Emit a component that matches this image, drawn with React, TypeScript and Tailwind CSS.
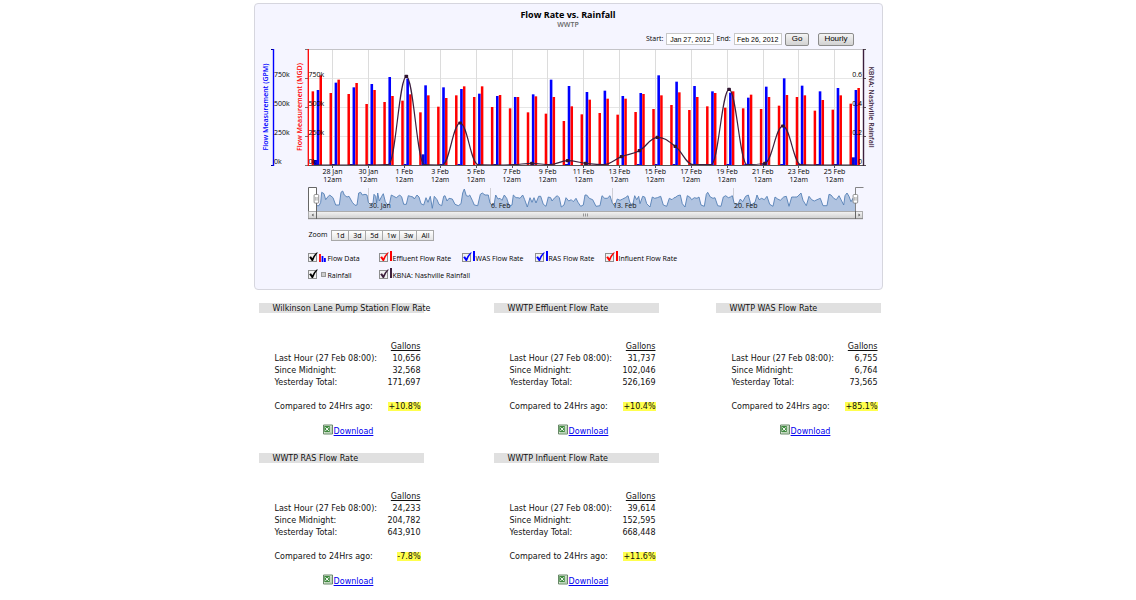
import React from "react";

/* ---------- Chart data ---------- */

// Daily flow bars, in 1/348 of full scale: [effluent, return/waste, influent, pump station]
const FLOW: number[][] = [
  [221, 225, 269, 15], [216, 247, 256, 3], [213, 233, 246, 3], [183, 243, 225, 3],
  [189, 264, 207, 3], [193, 259, 212, 3], [158, 239, 209, 32], [175, 233, 201, 3],
  [209, 228, 236, 3], [204, 214, 236, 0], [174, 207, 210, 3], [170, 204, 204, 0],
  [158, 212, 206, 0], [154, 256, 204, 0], [132, 237, 176, 3], [152, 219, 196, 0],
  [156, 223, 199, 0], [151, 207, 199, 0], [159, 216, 213, 3], [168, 269, 209, 3],
  [180, 250, 218, 3], [165, 237, 204, 3], [176, 221, 216, 3], [172, 217, 221, 3],
  [170, 202, 211, 3], [168, 235, 204, 3], [178, 260, 210, 3], [204, 238, 209, 3],
  [163, 221, 195, 3], [166, 231, 209, 3], [184, 225, 231, 23],
];

const RAIN = [
  0, 0, 0, 0, 1, 266, 1, 0, 126, 1, 0, 1, 5, 1, 13, 5, 1, 25, 43, 83, 56, 1, 1, 227, 1, 5, 117, 1, 0, 0, 0,
];

const TICKS = [
  "28 Jan", "30 Jan", "1 Feb", "3 Feb", "5 Feb", "7 Feb", "9 Feb", "11 Feb",
  "13 Feb", "15 Feb", "17 Feb", "19 Feb", "21 Feb", "23 Feb", "25 Feb",
];

// Hourly overview trace, three segments of [x, y] thirds
const TRACE: [number, number[]][] = [
  [51, [36,68,42,68,47,58,50,28,57,32,62,50,68,42,74,36,84,44,92,66,103,66,108,28,113,24,118,36,126,42,132,40,142,58,150,67,156,66,161,30,167,28,172,36,180,34,186,36,190,58,198,66,204,60,207,34,212,40,215,60,218,30,223,54,230,40,235,32,241,56,248,66,254,60,259,36,266,40,274,44,284,36,290,42,296,64,304,64,310,38,316,40,324,42,328,48,336,36,342,42,348,62,356,66,363,44,369,58,376,40,382,76,388,40,396,50,402,64,410,68,416,40,420,38,426,54,432,46,442,48,450,64,460,68,468,62,473,30,478,18,484,38,490,40,494,36,502,52,508,66,518,68,526,34,532,30,540,36,550,36,555,60]],
  [236, [5,66,12,66,17,36,24,48,30,46,36,52,43,36,50,46,58,70,66,66,70,36,78,44,84,44,90,46,98,36,104,50,112,72,120,44,126,58,132,44,138,60,146,40,152,40,160,64,168,70,175,42,182,44,186,54,194,44,202,38,208,44,214,72,222,66,228,44,236,54,244,50,250,56,258,46,264,58,272,70,280,66,285,36,290,36,298,46,308,50,318,70,330,68,336,38,344,46,352,46,360,38,366,58,374,70,382,48,390,52,398,48,406,44,414,38,420,60,428,66,434,38,440,50,446,40,450,62,458,40,464,42,470,62,480,72,487,42,494,46,502,44,512,40,520,66,530,70,538,46,546,50,552,44]],
  [421, [0,44,8,38,16,36,22,62,30,72,37,38,44,42,50,50,58,44,66,46,72,42,78,66,88,70,94,34,98,28,106,42,114,46,120,44,128,68,138,70,145,42,152,38,160,44,166,42,172,38,178,62,188,66,196,48,203,56,212,40,220,36,228,66,234,62,240,58,246,36,252,50,260,46,268,50,276,40,284,64,294,70,300,42,308,48,316,52,326,42,334,40,342,70,350,42,358,42,366,42,378,30,384,52,394,68,402,40,410,50,418,54,426,50,436,46,444,68,456,68,462,34,468,36,476,46,484,50,492,38,500,54,506,66,510,38,516,30,522,40,528,56,534,46,540,58]],
];

/* ---------- Chart geometry ---------- */

const LEFT = 54;
const RIGHT = 609;
const TOP = 4;
const BASE = 120;
const DAY = 17.93;

const rainPoints = RAIN.map((v, i) => ({ x: 62.7 + DAY * i, y: BASE - v / 3 }));

function splinePath(pts: { x: number; y: number }[]) {
  let out = `M${pts[0].x} ${pts[0].y}`;
  let prevRight = pts[0];
  for (let i = 1; i < pts.length; i++) {
    const p = pts[i];
    const last = pts[i - 1];
    const next = pts[i + 1];
    let left = p;
    let right = p;
    if (next) {
      const lx = (1.5 * p.x + last.x) / 2.5;
      let ly = (1.5 * p.y + last.y) / 2.5;
      const rx = (1.5 * p.x + next.x) / 2.5;
      let ry = (1.5 * p.y + next.y) / 2.5;
      const fix = ((ry - ly) * (rx - p.x)) / (rx - lx) + p.y - ry;
      ly += fix;
      ry += fix;
      if (ly > last.y && ly > p.y) {
        ly = Math.max(last.y, p.y);
        ry = 2 * p.y - ly;
      } else if (ly < last.y && ly < p.y) {
        ly = Math.min(last.y, p.y);
        ry = 2 * p.y - ly;
      }
      if (ry > next.y && ry > p.y) {
        ry = Math.max(next.y, p.y);
        ly = 2 * p.y - ry;
      } else if (ry < next.y && ry < p.y) {
        ry = Math.min(next.y, p.y);
        ly = 2 * p.y - ry;
      }
      left = { x: lx, y: ly };
      right = { x: rx, y: ry };
    }
    out += `C${prevRight.x} ${prevRight.y} ${left.x} ${left.y} ${p.x} ${p.y}`;
    prevRight = right;
  }
  return out;
}

const tracePoints = TRACE.flatMap(([start, list]) => {
  const pts: string[] = [];
  for (let i = 0; i < list.length; i += 2) {
    pts.push(`${(start + list[i] / 3).toFixed(1)} ${(138 + list[i + 1] / 3).toFixed(1)}`);
  }
  return pts;
});

function Bar({ x, v, w, fill }: { x: number; v: number; w: number; fill: string }) {
  return v > 0 ? <rect x={x} y={BASE - v / 3} width={w} height={v / 3} fill={fill} /> : null;
}

function Handle({ x }: { x: number }) {
  return (
    <g>
      <rect x={x - 2.2} y="149.5" width="4.6" height="8.6" rx="1" fill="#fff" stroke="#777" strokeWidth="0.8" />
      <path d={`M${x - 0.6} 152v3.6M${x + 0.8} 152v3.6`} stroke="#777" strokeWidth="0.6" />
    </g>
  );
}

function Chart() {
  return (
    <svg viewBox="0 0 629 176" className="block w-full font-['Open_Sans',sans-serif] text-[7px]" role="img" aria-label="Flow rate and rainfall by day">
      <defs>
        <linearGradient id="track" x1="0" y1="0" x2="0" y2="1">
          <stop offset="0" stopColor="#f4f4f4" />
          <stop offset="1" stopColor="#cfcfcf" />
        </linearGradient>
      </defs>

      <rect x={LEFT} y={TOP} width={RIGHT - LEFT} height={BASE - TOP} fill="#fff" />
      <g stroke="#dcdcdc" strokeWidth="1">
        {[33.5, 62.5, 91.5].map((y) => (
          <path key={y} d={`M${LEFT} ${y}H${RIGHT}`} stroke="#e6e6e6" />
        ))}
        {TICKS.map((t, i) => (
          <path key={t} d={`M${Math.floor(78.7 + 2 * DAY * i) + 0.5} ${TOP}V${BASE}`} />
        ))}
      </g>
      <path d={`M${LEFT} 4.5H${RIGHT}`} stroke="#c4c4c8" />

      {FLOW.map(([eff, was, inf, pump], i) => {
        const x = DAY * i;
        return (
          <g key={i}>
            <Bar x={57.6 + x} v={eff} w={2.5} fill="#ff0000" />
            <Bar x={60 + x} v={pump} w={3} fill="#0808c8" />
            <Bar x={62.7 + x} v={was} w={2.6} fill="#0000ff" />
            <Bar x={65.5 + x} v={inf} w={2.5} fill="#ff0000" />
          </g>
        );
      })}

      <path d={splinePath(rainPoints)} fill="none" stroke="#3d1f3d" strokeWidth="1.2" />
      {rainPoints.map((p, i) =>
        RAIN[i] > 1 ? <rect key={i} x={p.x - 1.8} y={p.y - 1.6} width="3.6" height="3.2" rx="0.8" fill="#301530" /> : null,
      )}

      <path d={`M${LEFT} 120.5H${RIGHT + 1}`} stroke="#555" />
      {TICKS.map((t, i) => (
        <path key={t} d={`M${Math.floor(78.7 + 2 * DAY * i) + 0.5} 121v2`} stroke="#555" />
      ))}
      <path d="M17 4.5h3M17 120.5h3" stroke="#000080" />
      <path d="M19.5 4V121" stroke="#0000ff" strokeWidth="1.4" />
      <path d="M51 4.5h3M51 33.5h3M51 62.5h3M51 91.5h3M51 120.5h3" stroke="#777" />
      <path d="M54.3 4V121" stroke="#ff0000" strokeWidth="1.3" />
      <path d="M609 4.5h3M609 33.5h3M609 62.5h3M609 91.5h3M609 120.5h3" stroke="#555" />
      <path d="M609.5 4V121" stroke="#3d1f3d" strokeWidth="1.4" />

      <g fill="#000">
        {["750k", "500k", "250k", "0k"].map((t, i) => (
          <g key={t}>
            <text x="20" y={32 + 29 * i}>{t}</text>
            <text x="54.5" y={32 + 29 * i}>{t}</text>
          </g>
        ))}
        {["0.6", "0.4", "0.2", "0"].map((t, i) => (
          <text key={t} x="608" y={32 + 29 * i} textAnchor="end">{t}</text>
        ))}
        {TICKS.map((t, i) => (
          <g key={t} textAnchor="middle">
            <text x={78.5 + 2 * DAY * i} y="129">{t}</text>
            <text x={78.5 + 2 * DAY * i} y="137">12am</text>
          </g>
        ))}
      </g>

      <g fontWeight="600" textAnchor="middle">
        <text transform="translate(14 62) rotate(-90)" fill="#0000ff">Flow Measurement (GPM)</text>
        <text transform="translate(48 62) rotate(-90)" fill="#ff0000">Flow Measurement (MGD)</text>
        <text transform="translate(615 62) rotate(90)" fill="#3d1f3d">KBNA: Nashville Rainfall</text>
      </g>

      {/* Overview strip */}
      {[114.5, 236.5, 358.5, 479.5].map((x) => (
        <path key={x} d={`M${x} 143V166`} stroke="#cfcfd6" />
      ))}
      <path d={`M63 166L${tracePoints.join("L")}L601 166Z`} fill="#b0c3e0" />
      <path d={`M${tracePoints.join("L")}`} fill="none" stroke="#5580b5" strokeWidth="0.9" />
      <g fill="#111">
        <text x="115" y="163">30. Jan</text>
        <text x="237" y="163">6. Feb</text>
        <text x="359" y="163">13. Feb</text>
        <text x="480" y="163">20. Feb</text>
      </g>
      <path d="M54.5 166V142.5H62.5V166" fill="#fff" stroke="#555" strokeWidth="0.9" />
      <path d="M609.5 142.5H601.5V166" fill="none" stroke="#777" strokeWidth="0.9" />
      <rect x="54.5" y="166.5" width="554" height="7" fill="url(#track)" stroke="#999" strokeWidth="0.8" />
      <path d="M54 173.7H609" stroke="#888" />
      <path d="M62.5 166V174M601.5 166V174" stroke="#666" />
      <path d="M59.5 168.5v3l-1.8-1.5zM604.5 168.5v3l1.8-1.5z" fill="#555" />
      <path d="M329.5 168.5v3M331.5 168.5v3M333.5 168.5v3" stroke="#777" strokeWidth="0.7" />
      <Handle x={62.3} />
      <Handle x={601.3} />
    </svg>
  );
}

/* ---------- Controls ---------- */

const BUTTON =
  "flex h-[13px] items-center rounded-[2px] border border-[#8c8c8c] bg-linear-to-b from-[#f4f4f4] to-[#d2d2d2] font-['Liberation_Sans',sans-serif] text-[8px] leading-none text-black";
const FIELD =
  "h-3 w-[48px] border border-[#c8c8c8] bg-white text-center font-['Liberation_Sans',sans-serif] text-[7px] leading-none text-black";

function Toggle({ label, tick, children }: { label: string; tick: string; children: React.ReactNode }) {
  return (
    <label className="flex h-3 items-center">
      <span className="relative block size-[9px] shrink-0">
        <input type="checkbox" defaultChecked className="peer block size-[9px] appearance-none border border-[#8e8f8f] bg-[#f2f2f2]" />
        <svg viewBox="0 0 10 10" className={`pointer-events-none absolute -top-px left-0 hidden size-[10px] peer-checked:block ${tick}`}>
          <path d="M1.2 5.2 3 4.2 4.3 6.2Q6 2.4 9 .2L9.8 .8Q6.6 4 5 9H3.8Z" fill="currentColor" />
        </svg>
      </span>
      {children}
      <span className="pt-[3px] leading-none whitespace-nowrap">{label}</span>
    </label>
  );
}

function Mark({ color }: { color: string }) {
  return <span className={`mr-px ml-[2px] h-[10px] w-[2px] shrink-0 self-start ${color}`} />;
}

function FlowPanel() {
  return (
    <section className="rounded-[4px] border border-[#d6d6de] bg-[#f5f5ff] font-['Open_Sans',sans-serif] text-[7px] text-black">
      <h1 className="pt-[5px] text-center text-[9px] leading-3 font-bold">Flow Rate vs. Rainfall</h1>
      <p className="text-center leading-[7px] font-semibold text-[#666]">WWTP</p>
      <form className="mt-1 flex h-[14px] items-center justify-end pr-7" onSubmit={(e) => e.preventDefault()}>
        <label htmlFor="start" className="mr-[3px]">Start:</label>
        <input id="start" defaultValue="Jan 27, 2012" className={FIELD} />
        <label htmlFor="end" className="mr-[3px] ml-[2px]">End:</label>
        <input id="end" defaultValue="Feb 26, 2012" className={FIELD} />
        <button type="submit" className={`${BUTTON} ml-[3px] px-[6px]`}>Go</button>
        <button type="button" className={`${BUTTON} ml-[9px] px-[5px]`}>Hourly</button>
      </form>
      <div className="-mx-px -mt-px">
        <Chart />
      </div>
      <div className="mt-[9px] flex items-center pl-[54px]">
        <span className="mr-1">Zoom</span>
        {["1d", "3d", "5d", "1w", "3w", "All"].map((z) => (
          <button
            key={z}
            type="button"
            className="-mr-px h-[11px] w-[18px] border border-[#a8a8a8] bg-linear-to-b from-white to-[#e4e4e4] leading-none"
          >
            {z}
          </button>
        ))}
      </div>
      <div className="grid grid-cols-[71px_83px_73px_70px_auto] gap-y-[5px] pt-[10px] pb-[9px] pl-[53px]">
        <Toggle label="Flow Data" tick="text-black">
          <svg viewBox="0 0 7 9" className="mx-[2px] h-[9px] w-[7px]">
            <path d="M1 1V9" stroke="#f00" strokeWidth="1.8" />
            <path d="M3.5 3V9M5.9 5V9" stroke="#00f" strokeWidth="1.8" />
          </svg>
        </Toggle>
        <Toggle label="Effluent Flow Rate" tick="text-[#f00]"><Mark color="bg-[#f00]" /></Toggle>
        <Toggle label="WAS Flow Rate" tick="text-[#00f]"><Mark color="bg-[#00f]" /></Toggle>
        <Toggle label="RAS Flow Rate" tick="text-[#00f]"><Mark color="bg-[#00f]" /></Toggle>
        <Toggle label="Influent Flow Rate" tick="text-[#f00]"><Mark color="bg-[#f00]" /></Toggle>
        <Toggle label="Rainfall" tick="text-black">
          <span className="mr-[2px] ml-[4px] size-[5px] border border-[#999] bg-[#ccc]" />
        </Toggle>
        <Toggle label="KBNA: Nashville Rainfall" tick="text-[#3d1f3d]"><Mark color="bg-[#3d1f3d]" /></Toggle>
      </div>
    </section>
  );
}

/* ---------- Station summaries ---------- */

type Station = { name: string; hour: string; today: string; yesterday: string; change: string };

const STATIONS: Station[] = [
  { name: "Wilkinson Lane Pump Station Flow Rate", hour: "10,656", today: "32,568", yesterday: "171,697", change: "+10.8%" },
  { name: "WWTP Effluent Flow Rate", hour: "31,737", today: "102,046", yesterday: "526,169", change: "+10.4%" },
  { name: "WWTP WAS Flow Rate", hour: "6,755", today: "6,764", yesterday: "73,565", change: "+85.1%" },
  { name: "WWTP RAS Flow Rate", hour: "24,233", today: "204,782", yesterday: "643,910", change: "-7.8%" },
  { name: "WWTP Influent Flow Rate", hour: "39,614", today: "152,595", yesterday: "668,448", change: "+11.6%" },
];

function SheetIcon() {
  return (
    <svg viewBox="0 0 10 11" className="mr-px mb-[3px] h-[11px] w-[10px]" aria-hidden="true">
      <path d="M.5 1H9.5V10H.5Z" fill="#dfeadb" stroke="#5a7d5a" strokeWidth="0.9" />
      <path d="M1.3 2H6.8V8H1.3Z" fill="#3f8a3f" />
      <path d="M2.4 3.3 5.8 6.9M5.8 3.3 2.4 6.9" stroke="#fff" strokeWidth="1" />
      <path d="M8.1 2.5V8.8M2 9H8.5" stroke="#8fb98f" strokeWidth="0.8" />
    </svg>
  );
}

function StationCard({ s }: { s: Station }) {
  const rows = [
    ["Last Hour (27 Feb 08:00):", s.hour],
    ["Since Midnight:", s.today],
    ["Yesterday Total:", s.yesterday],
  ];
  return (
    <article className="w-[165px]">
      <h2 className="h-[10px] bg-[#e0e0e0] pl-[14px] leading-[11px] whitespace-nowrap">{s.name}</h2>
      <div className="pt-7 pr-[3px] pl-4">
        <table className="w-full leading-3">
          <thead>
            <tr>
              <td />
              <th className="text-right font-normal underline">Gallons</th>
            </tr>
          </thead>
          <tbody>
            {rows.map(([k, v]) => (
              <tr key={k}>
                <th className="text-left font-normal whitespace-nowrap">{k}</th>
                <td className="text-right">{v}</td>
              </tr>
            ))}
            <tr>
              <th className="pt-3 text-left font-normal whitespace-nowrap">Compared to 24Hrs ago:</th>
              <td className="pt-3 text-right">
                <span className="bg-[#ffff4d]">{s.change}</span>
              </td>
            </tr>
          </tbody>
        </table>
      </div>
      <a href="#download" className="mx-auto mt-[11px] flex w-fit items-center pl-[14px] text-[#0000ee] underline">
        <SheetIcon />
        <span className="pt-px">Download</span>
      </a>
    </article>
  );
}

export default function App() {
  return (
    <main className="min-h-screen bg-white pt-[3px]">
      <div className="mx-auto w-full max-w-[629px]">
        <FlowPanel />
        <div className="grid auto-rows-[150px] grid-cols-[235fr_222fr_167fr] pt-[13px] pl-[5px] font-['DejaVu_Sans',sans-serif] text-[8px] leading-3 text-[#111]">
          {STATIONS.map((s) => (
            <StationCard key={s.name} s={s} />
          ))}
        </div>
      </div>
    </main>
  );
}
